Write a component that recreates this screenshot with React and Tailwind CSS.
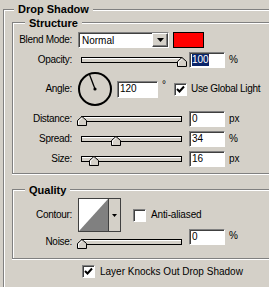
import React from 'react';

// sunken white edit field
const Field = ({ className = '', children }) => (
  <div className={`flex h-[16px] items-center border-t border-l border-[#808080] border-b border-r border-b-white border-r-white bg-white pl-[2px] shadow-[inset_1px_1px_0_#404040] ${className}`}>
    {children}
  </div>
);

const CheckBox = ({ checked }) => (
  <div className="flex h-[13px] w-[13px] shrink-0 items-center justify-center border-t border-l border-[#808080] border-b border-r border-b-white border-r-white bg-white shadow-[inset_1px_1px_0_#404040]">
    {checked && (
      <svg width="9" height="9" viewBox="0 0 9 9">
        <path d="M1 4 L3.5 6.5 L8 1.5" fill="none" stroke="#000" strokeWidth="2" />
      </svg>
    )}
  </div>
);

const Slider = ({ pos }) => (
  <div className="relative ml-[9px] h-[6px] w-[101px] shrink-0 border border-black bg-[#d4d0c8] shadow-[inset_0_1px_0_#fff]">
    <svg className="absolute top-[-1px]" style={{ left: pos }} width="10" height="10" viewBox="0 0 10 10">
      <polygon points="5,0.5 9.5,4.5 9.5,9.5 0.5,9.5 0.5,4.5" fill="#d4d0c8" stroke="#000" />
      <polyline points="1.5,8.5 1.5,5 5,1.8" fill="none" stroke="#fff" />
    </svg>
  </div>
);

const Label = ({ children }) => (
  <div className="w-[59px] shrink-0 text-right leading-[12px] tracking-[-0.3px]">{children}</div>
);

const SliderRow = ({ label, pos, value, unit, className = '' }) => (
  <div className={`flex h-[16px] items-center ${className}`}>
    <Label>{label}</Label>
    <Slider pos={pos} />
    <Field className="ml-[7px] w-[36px]">{value}</Field>
    <span className="ml-[4px]">{unit}</span>
  </div>
);

const Legend = ({ children, className = '' }) => (
  <div className={`w-fit bg-[#d4d0c8] px-[4px] text-[11px] font-bold leading-[12px] ${className}`}>
    {children}
  </div>
);

export default function App() {
  return (
    <div className="h-[287px] w-[269px] overflow-hidden bg-[#d4d0c8] pl-[3px] pt-[9px] font-['Liberation_Sans',Arial,sans-serif] text-[10px] leading-[12px] text-black">
      <div className="h-[300px] w-[320px] border-l border-t border-[#808080] shadow-[inset_1px_1px_0_#fff]">
        <Legend className="-mt-[7px] ml-[10px]">Drop Shadow</Legend>

        {/* Structure */}
        <div className="ml-[8px] mt-[7px] h-[152px] w-[300px] border-l border-t border-b border-[#808080] shadow-[inset_1px_1px_0_#fff,0_1px_0_#fff]">
          <Legend className="-mt-[6px] ml-[12px]">Structure</Legend>

          <div className="mt-[3px] flex h-[16px] items-center">
            <Label>Blend Mode:</Label>
            <div className="ml-[6px] flex h-[16px] w-[91px] border-t border-l border-[#808080] border-b border-r border-b-white border-r-white bg-white shadow-[inset_1px_1px_0_#404040]">
              <div className="flex flex-1 items-center pl-[3px] pt-[1px]">Normal</div>
              <div className="flex h-full w-[16px] items-center justify-center border-t border-l border-white border-b border-r border-b-[#404040] border-r-[#404040] bg-[#d4d0c8] shadow-[inset_-1px_-1px_0_#808080]">
                <svg width="7" height="4" viewBox="0 0 7 4"><polygon points="0,0 7,0 3.5,4" fill="#000" /></svg>
              </div>
            </div>
            <div className="ml-[4px] h-[16px] w-[31px] border border-black bg-[#ff0000]" />
          </div>

          <div className="mt-[4px] flex h-[16px] items-center">
            <Label>Opacity:</Label>
            <Slider pos={95} />
            <Field className="ml-[7px] w-[36px]">
              <span className="bg-[#0a246a] leading-[12px] text-white">100</span>
            </Field>
            <span className="ml-[4px]">%</span>
          </div>

          <div className="mt-[3px] flex h-[36px] items-center">
            <Label>Angle:</Label>
            <svg className="ml-[5px] shrink-0" width="36" height="36" viewBox="0 0 36 36">
              <circle cx="18" cy="18" r="16" fill="none" stroke="#000" strokeWidth="2" />
              <line x1="18" y1="18" x2="12.5" y2="3.5" stroke="#000" strokeWidth="1.3" />
              <circle cx="18" cy="18" r="1.6" fill="#000" />
            </svg>
            <Field className="ml-[4px] !h-[17px] w-[41px]">120</Field>
            <span className="ml-[4px] mt-[9px] w-[8px] self-start leading-[10px]">°</span>
            <div className="ml-[4px]"><CheckBox checked /></div>
            <span className="ml-[4px] tracking-[-0.3px]">Use Global Light</span>
          </div>

          <SliderRow className="mt-[4px]" label="Distance:" pos={-5} value="0" unit="px" />
          <SliderRow className="mt-[4px]" label="Spread:" pos={29} value="34" unit="%" />
          <SliderRow className="mt-[4px]" label="Size:" pos={7} value="16" unit="px" />
        </div>

        {/* Quality */}
        <div className="ml-[8px] mt-[15px] h-[70px] w-[300px] border-l border-t border-b border-[#808080] shadow-[inset_1px_1px_0_#fff,0_1px_0_#fff]">
          <Legend className="-mt-[6px] ml-[12px]">Quality</Legend>

          <div className="mt-[2px] flex h-[34px] items-center">
            <Label>Contour:</Label>
            <div className="ml-[6px] flex h-[34px] w-[43px] border border-[#404040] bg-white">
              <svg width="29" height="32" viewBox="0 0 29 32" preserveAspectRatio="none">
                <polygon points="0,32 29,0 29,32" fill="#808080" />
              </svg>
              <div className="flex flex-1 items-center justify-center border-l border-[#404040] bg-[#d4d0c8]">
                <svg width="5" height="3" viewBox="0 0 5 3"><polygon points="0,0 5,0 2.5,3" fill="#000" /></svg>
              </div>
            </div>
            <div className="ml-[12px]"><CheckBox /></div>
            <span className="ml-[5px] tracking-[-0.15px]">Anti-aliased</span>
          </div>

          <div className="mt-[2px] flex h-[16px] items-center">
            <Label>Noise:</Label>
            <Slider pos={-5} />
            <Field className="-mt-[5px] ml-[7px] w-[36px] self-start">0</Field>
            <span className="-mt-[4px] ml-[4px] self-start">%</span>
          </div>
        </div>

        <div className="ml-[78px] mt-[6px] flex h-[13px] items-center">
          <CheckBox checked />
          <span className="ml-[5px]">Layer Knocks Out Drop Shadow</span>
        </div>
      </div>
    </div>
  );
}
